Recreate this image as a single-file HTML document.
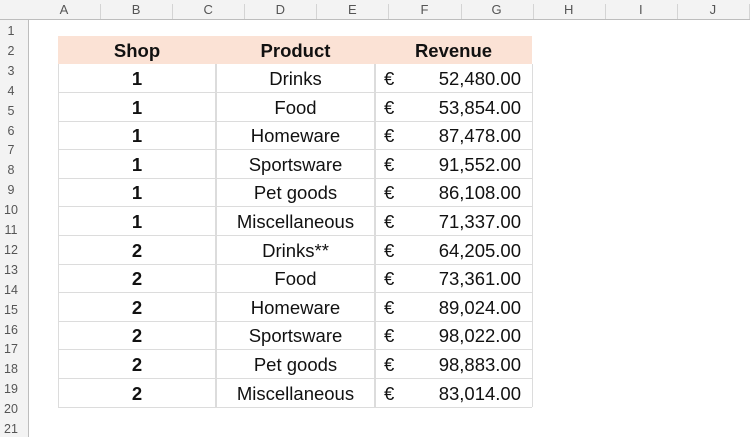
<!DOCTYPE html>
<html><head><meta charset="utf-8"><style>
body{margin:0;width:750px;height:437px;background:#fff;font-family:"Liberation Sans",sans-serif;position:relative;overflow:hidden}
.ch{position:absolute;top:0;height:19px;background:#f3f3f3;border-bottom:1px solid #bdbdbd;left:0;width:750px}
.cl{position:absolute;top:2px;font-size:13px;color:#555;width:72px;text-align:center}
.cs{position:absolute;top:4px;width:1px;height:15px;background:#d4d4d4}
.rh{position:absolute;left:0;top:20px;width:28px;height:417px;background:#f3f3f3;border-right:1px solid #bdbdbd}
.rl{position:absolute;left:0;width:22px;text-align:center;font-size:12.5px;color:#555}
.hd{position:absolute;left:58px;top:36px;width:474px;height:28px;background:#fbe2d5}
.t{position:absolute;font-size:18.5px;color:#111;text-align:center;line-height:30px}
.b{font-weight:bold}
.row{position:absolute;left:58px;width:474px;height:28px;border-bottom:1px solid #dcdcdc}
.v{position:absolute;left:58px;width:1px;background:#dcdcdc}
</style></head><body>
<div class="ch"></div>
<div class="rh"></div>
<div class="hd"></div>
<div id="c"></div>
<script>
var cols="ABCDEFGHIJ",h="";
for(var i=0;i<10;i++){var x=28+i*72.1;h+='<div class="cl" style="left:'+x+'px">'+cols[i]+'</div><div class="cs" style="left:'+(x+72)+'px"></div>';}
for(var r=1;r<=21;r++){h+='<div class="rl" style="top:'+(24+(r-1)*19.9)+'px">'+r+'</div>';}
h+='<div class="t b" style="left:58px;top:36px;width:158px">Shop</div><div class="t b" style="left:216px;top:36px;width:159px">Product</div><div class="t b" style="left:375px;top:36px;width:157px">Revenue</div>';
var d=[[1,"Drinks","52,480.00"],[1,"Food","53,854.00"],[1,"Homeware","87,478.00"],[1,"Sportsware","91,552.00"],[1,"Pet goods","86,108.00"],[1,"Miscellaneous","71,337.00"],[2,"Drinks**","64,205.00"],[2,"Food","73,361.00"],[2,"Homeware","89,024.00"],[2,"Sportsware","98,022.00"],[2,"Pet goods","98,883.00"],[2,"Miscellaneous","83,014.00"]];
for(var k=0;k<12;k++){var y=64+k*28.6;
h+='<div class="row" style="top:'+y+'px"></div>';
h+='<div class="t b" style="left:58px;top:'+y+'px;width:158px">'+d[k][0]+'</div>';
h+='<div class="t" style="left:216px;top:'+y+'px;width:159px">'+d[k][1]+'</div>';
h+='<div class="t" style="left:384px;top:'+y+'px;text-align:left">€</div>';
h+='<div class="t" style="left:380px;top:'+y+'px;width:141px;text-align:right">'+d[k][2]+'</div>';}
h+='<div class="v" style="left:58px;top:64px;height:343px"></div><div class="v" style="left:215px;top:64px;height:343px;width:2px"></div><div class="v" style="left:374px;top:64px;height:343px;width:2px"></div><div class="v" style="left:532px;top:64px;height:343px"></div>';
document.getElementById('c').outerHTML=h;
</script>
</body></html>
